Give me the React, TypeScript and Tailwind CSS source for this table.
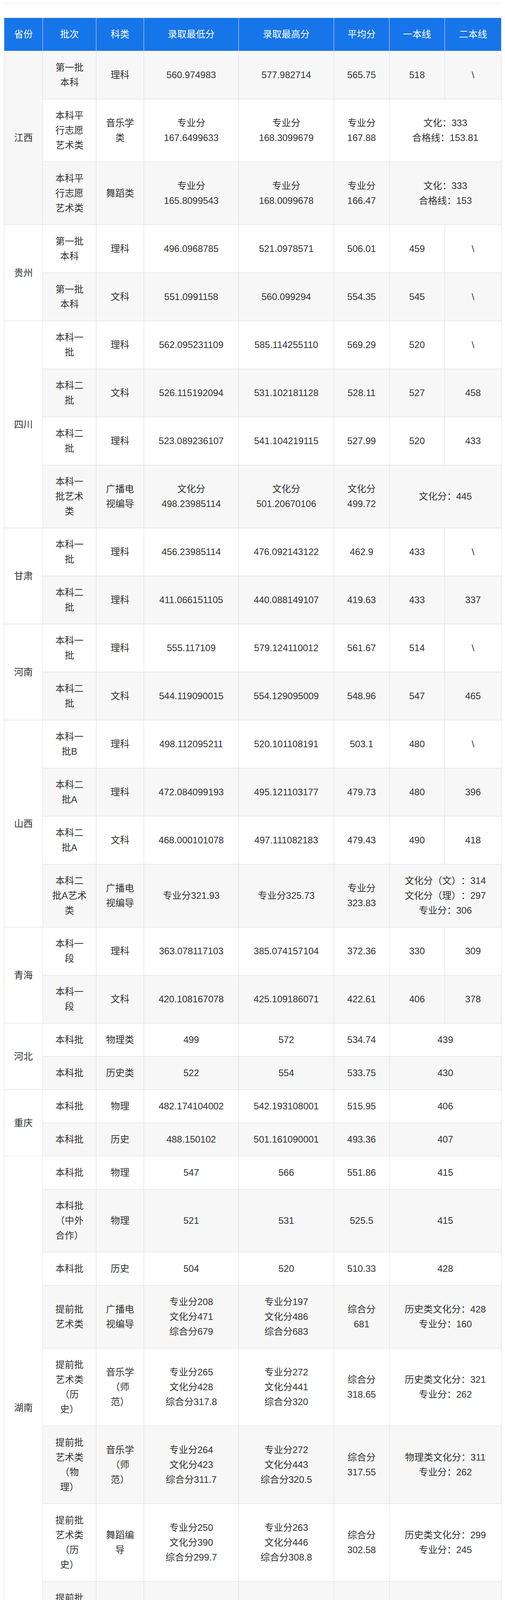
type Cell = { t: string; rs?: number; cs?: number };

const c = (t: string, rs?: number, cs?: number): Cell => ({ t, rs, cs });

const headers = ["省份", "批次", "科类", "录取最低分", "录取最高分", "平均分", "一本线", "二本线"];
const widths = ["w-[99px]", "w-[137px]", "w-[122px]", "w-[243px]", "w-[244px]", "w-[142px]", "w-[142px]", "w-[145px]"];

const rows: Cell[][] = [
  [c("江西", 3), c("第一批本科"), c("理科"), c("560.974983"), c("577.982714"), c("565.75"), c("518"), c("\\")],
  [c("本科平行志愿艺术类"), c("音乐学类"), c("专业分\n167.6499633"), c("专业分\n168.3099679"), c("专业分\n167.88"), c("文化：333\n合格线：153.81", 1, 2)],
  [c("本科平行志愿艺术类"), c("舞蹈类"), c("专业分\n165.8099543"), c("专业分\n168.0099678"), c("专业分\n166.47"), c("文化：333\n合格线：153", 1, 2)],
  [c("贵州", 2), c("第一批本科"), c("理科"), c("496.0968785"), c("521.0978571"), c("506.01"), c("459"), c("\\")],
  [c("第一批本科"), c("文科"), c("551.0991158"), c("560.099294"), c("554.35"), c("545"), c("\\")],
  [c("四川", 4), c("本科一批"), c("理科"), c("562.095231109"), c("585.114255110"), c("569.29"), c("520"), c("\\")],
  [c("本科二批"), c("文科"), c("526.115192094"), c("531.102181128"), c("528.11"), c("527"), c("458")],
  [c("本科二批"), c("理科"), c("523.089236107"), c("541.104219115"), c("527.99"), c("520"), c("433")],
  [c("本科一批艺术类"), c("广播电视编导"), c("文化分\n498.23985114"), c("文化分\n501.20670106"), c("文化分\n499.72"), c("文化分：445", 1, 2)],
  [c("甘肃", 2), c("本科一批"), c("理科"), c("456.23985114"), c("476.092143122"), c("462.9"), c("433"), c("\\")],
  [c("本科二批"), c("理科"), c("411.066151105"), c("440.088149107"), c("419.63"), c("433"), c("337")],
  [c("河南", 2), c("本科一批"), c("理科"), c("555.117109"), c("579.124110012"), c("561.67"), c("514"), c("\\")],
  [c("本科二批"), c("文科"), c("544.119090015"), c("554.129095009"), c("548.96"), c("547"), c("465")],
  [c("山西", 4), c("本科一批B"), c("理科"), c("498.112095211"), c("520.101108191"), c("503.1"), c("480"), c("\\")],
  [c("本科二批A"), c("理科"), c("472.084099193"), c("495.121103177"), c("479.73"), c("480"), c("396")],
  [c("本科二批A"), c("文科"), c("468.000101078"), c("497.111082183"), c("479.43"), c("490"), c("418")],
  [c("本科二批A艺术类"), c("广播电视编导"), c("专业分321.93"), c("专业分325.73"), c("专业分\n323.83"), c("文化分（文）：314\n文化分（理）：297\n专业分：306", 1, 2)],
  [c("青海", 2), c("本科一段"), c("理科"), c("363.078117103"), c("385.074157104"), c("372.36"), c("330"), c("309")],
  [c("本科一段"), c("文科"), c("420.108167078"), c("425.109186071"), c("422.61"), c("406"), c("378")],
  [c("河北", 2), c("本科批"), c("物理类"), c("499"), c("572"), c("534.74"), c("439", 1, 2)],
  [c("本科批"), c("历史类"), c("522"), c("554"), c("533.75"), c("430", 1, 2)],
  [c("重庆", 2), c("本科批"), c("物理"), c("482.174104002"), c("542.193108001"), c("515.95"), c("406", 1, 2)],
  [c("本科批"), c("历史"), c("488.150102"), c("501.161090001"), c("493.36"), c("407", 1, 2)],
  [c("湖南", 8), c("本科批"), c("物理"), c("547"), c("566"), c("551.86"), c("415", 1, 2)],
  [c("本科批（中外合作）"), c("物理"), c("521"), c("531"), c("525.5"), c("415", 1, 2)],
  [c("本科批"), c("历史"), c("504"), c("520"), c("510.33"), c("428", 1, 2)],
  [c("提前批艺术类"), c("广播电视编导"), c("专业分208\n文化分471\n综合分679"), c("专业分197\n文化分486\n综合分683"), c("综合分\n681"), c("历史类文化分：428\n专业分：160", 1, 2)],
  [c("提前批艺术类（历史）"), c("音乐学（师范）"), c("专业分265\n文化分428\n综合分317.8"), c("专业分272\n文化分441\n综合分320"), c("综合分\n318.65"), c("历史类文化分：321\n专业分：262", 1, 2)],
  [c("提前批艺术类（物理）"), c("音乐学（师范）"), c("专业分264\n文化分423\n综合分311.7"), c("专业分272\n文化分443\n综合分320.5"), c("综合分\n317.55"), c("物理类文化分：311\n专业分：262", 1, 2)],
  [c("提前批艺术类（历史）"), c("舞蹈编导"), c("专业分250\n文化分390\n综合分299.7"), c("专业分263\n文化分446\n综合分308.8"), c("综合分\n302.58"), c("历史类文化分：299\n专业分：245", 1, 2)],
  [c("提前批艺术类（物理）"), c("舞蹈编导"), c("专业分246\n文化分398\n综合分295.5"), c("专业分256\n文化分414\n综合分301"), c("综合分\n298.23"), c("物理类文化分：290\n专业分：245", 1, 2)],
  [c("湖北"), c("本科批"), c("物理"), c("551"), c("580"), c("558"), c("424", 1, 2)],
  [c("福建"), c("本科批"), c("物理"), c("514"), c("520"), c("516.25"), c("431", 1, 2)],
  [c("江苏"), c("普通类"), c("物理"), c("528"), c("539"), c("534.33"), c("448", 1, 2)],
  [c("辽宁"), c("本科批"), c("物理"), c("506"), c("532"), c("517.5"), c("360", 1, 2)],
  [c("海南"), c("本科批"), c("综合改革"), c("578"), c("603"), c("585.05"), c("483", 1, 2)],
  [c("山东"), c("常规批"), c("综合改革"), c("504"), c("528"), c("520.33"), c("443", 1, 2)],
  [c("浙江"), c("第一段"), c("综合改革"), c("570"), c("587"), c("575.33"), c("488", 1, 2)],
  [c("广西"), c("本科二批"), c("理科"), c("488.958416"), c("488.958723"), c("488.96"), c("475"), c("347")],
  [c("安徽"), c("本科二批"), c("理科"), c("498.7262"), c("524.9705"), c("504.19"), c("482"), c("427")],
  [c("云南"), c("本科二批"), c("理工类"), c("470.953087157"), c("493.959086204"), c("479.64"), c("485"), c("405")],
  [c("新疆"), c("本科二批"), c("文科"), c("417.100137081"), c("433.108162069"), c("421.91"), c("458"), c("354")],
  [c("新疆"), c("内高班"), c("理科"), c("398.0811441"), c("454.0682141"), c("411.20"), c(""), c("")],
  [c("陕西"), c("本科二批"), c("文科"), c("486.114090211"), c("487.108085186"), c("486.61"), c("489"), c("403")],
  [c("内蒙古", 2), c("本科二批"), c("理科"), c("463"), c("464"), c("463.5"), c("434"), c("333")],
  [c("本科二批"), c("文科"), c("469"), c("481"), c("475"), c("468"), c("379")],
  [c("西藏"), c("本科一批"), c("文科"), c("321"), c("336"), c("329.8"), c("400（汉族）\n320（少数民族）"), c("\\")],
  [c("港澳台", 2), c("本科批"), c("理科"), c("453"), c("481"), c("464.33"), c("380", 1, 2)],
  [c("本科批"), c("文科"), c("398"), c("398"), c("398"), c("360", 1, 2)],
];

function CellText({ text }: { text: string }) {
  const lines = text.split("\n");
  return (
    <>
      {lines.map((line, i) => (
        <div key={i}>{line}</div>
      ))}
    </>
  );
}

export default function App() {
  return (
    <div className="min-h-[6422px] bg-white px-[10px] pt-[7px] font-['Liberation_Sans','Noto_Sans_CJK_SC',sans-serif] text-[24px] leading-[38px] text-[#333] [text-spacing-trim:space-all]">
      <div className="h-px bg-[#e8e8e8]" />
      <table className="mt-[37px] w-full table-fixed border-collapse text-center">
        <colgroup>
          {widths.map((w, i) => (
            <col key={i} className={w} />
          ))}
        </colgroup>
        <thead>
          <tr className="bg-[#1775ea] text-white">
            {headers.map((h) => (
              <th key={h} className="border border-[#dcdcdc] px-6 py-[23px] font-normal">
                {h}
              </th>
            ))}
          </tr>
        </thead>
        <tbody>
          {rows.map((row, i) => (
            <tr key={i} className={i % 2 === 0 ? "bg-[#f7f7f7]" : "bg-white"}>
              {row.map((cell, j) => (
                <td
                  key={j}
                  rowSpan={cell.rs}
                  colSpan={cell.cs}
                  className="border border-[#dcdcdc] px-6 py-[23px] align-middle"
                >
                  <CellText text={cell.t} />
                </td>
              ))}
            </tr>
          ))}
          <tr className="bg-white">
            <td colSpan={8} className="border border-[#dcdcdc] px-6 py-[23px]">
              <span className="bg-[#f7f7f7]">注：以上投档分数情况最终以各省考试院公布为准。</span>
            </td>
          </tr>
        </tbody>
      </table>
    </div>
  );
}
